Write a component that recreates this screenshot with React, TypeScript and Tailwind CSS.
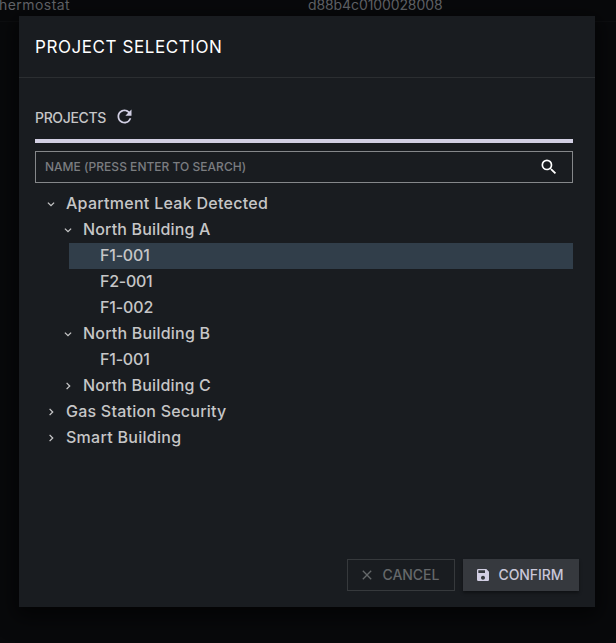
import { MdRefresh, MdSearch, MdSave, MdClose } from "react-icons/md";

type Row = { label: string; level: 0 | 1 | 2; state?: "open" | "closed"; selected?: boolean; tracking: string };

const rows: Row[] = [
  { label: "Apartment Leak Detected", level: 0, state: "open", tracking: "tracking-[0.28px]" },
  { label: "North Building A", level: 1, state: "open", tracking: "tracking-[0.17px]" },
  { label: "F1-001", level: 2, selected: true, tracking: "tracking-[-0.2px]" },
  { label: "F2-001", level: 2, tracking: "tracking-[-0.25px]" },
  { label: "F1-002", level: 2, tracking: "tracking-[-0.15px]" },
  { label: "North Building B", level: 1, state: "open", tracking: "tracking-[0.2px]" },
  { label: "F1-001", level: 2, tracking: "tracking-[-0.2px]" },
  { label: "North Building C", level: 1, state: "closed", tracking: "tracking-[0.17px]" },
  { label: "Gas Station Security", level: 0, state: "closed", tracking: "tracking-[0.23px]" },
  { label: "Smart Building", level: 0, state: "closed", tracking: "tracking-[0.28px]" },
];

const indent = { 0: "ml-0", 1: "ml-[17px]", 2: "ml-[34px]" };

function Chevron({ state }: { state?: "open" | "closed" }) {
  return (
    <svg className="h-4 w-4 shrink-0" viewBox="0 0 16 16" fill="none" stroke="currentColor" strokeWidth="1.3">
      {state === "open" && <path d="M4.9 6.6 8 9.7l3.1-3.1" />}
      {state === "closed" && <path d="M6.6 4.9 9.7 8l-3.1 3.1" />}
    </svg>
  );
}

export default function App() {
  return (
    <div className="relative h-[643px] w-[616px] overflow-hidden bg-[#08090b] font-['Inter',sans-serif] text-[#c6c6c7]">
      <div className="flex h-[22px] border-b border-[#0d0e10] text-[14px] leading-[20px] text-[#63656a]">
        <span className="-mt-[5px] -ml-[1px] w-[309px] tracking-[0.45px]">hermostat</span>
        <span className="-mt-[5px] tracking-[-0.1px]">d88b4c0100028008</span>
      </div>

      <div className="absolute top-[16px] left-[19px] flex h-[591px] w-[576px] flex-col bg-[#191c20] shadow-[0_6px_20px_4px_rgba(0,0,0,0.6)]">
        <header className="h-[62px] shrink-0 border-b border-[#2b2e31] px-4 text-[17px] leading-[62px] text-white">
          <span className="tracking-[0.58px]">PROJECT SELECTION</span>
        </header>

        <div className="flex grow flex-col pr-[22px] pl-4">
          <div className="mt-[28px] flex h-[22px] items-center">
            <span className="w-[79px] text-[14px] font-medium tracking-[-0.35px]">PROJECTS</span>
            <MdRefresh className="-mt-px text-[21px] text-[#d2d0e4]" />
          </div>
          <div className="mt-[11px] h-1 bg-[#d2cfe3]" />
          <div className="mt-2 flex h-8 items-center justify-between border border-[#85878a] pr-[13px] pl-[9px]">
            <span className="text-[12px] font-medium tracking-[0.02px] text-[#7b7d80]">NAME (PRESS ENTER TO SEARCH)</span>
            <MdSearch className="text-[20px] text-white" />
          </div>
          <ul className="mt-2">
            {rows.map((r, i) => (
              <li
                key={i}
                className={`flex h-[26px] items-center pl-2 ${indent[r.level]} ${r.selected ? "bg-[#313e4a]" : ""}`}
              >
                <Chevron state={r.state} />
                <span className={`ml-[7px] pb-0.5 text-[16px] font-medium whitespace-nowrap ${r.tracking}`}>{r.label}</span>
              </li>
            ))}
          </ul>
        </div>

        <footer className="flex justify-end gap-2 p-4 text-[14px] font-medium">
          <button className="flex h-8 w-[108px] items-center border border-[#36393c] pl-[11px] text-[#65686a]">
            <MdClose className="text-[16px]" />
            <span className="ml-[7.5px] pb-0.5 tracking-[-0.05px]">CANCEL</span>
          </button>
          <button className="flex h-8 w-[116px] items-center bg-[#36393e] pl-3 text-[#c9c7d9] shadow-[0_2px_3px_rgba(0,0,0,0.4)]">
            <MdSave className="text-[16px] text-[#d2cfe3]" />
            <span className="ml-[7.5px] pb-0.5 tracking-[-0.1px]">CONFIRM</span>
          </button>
        </footer>
      </div>
    </div>
  );
}
